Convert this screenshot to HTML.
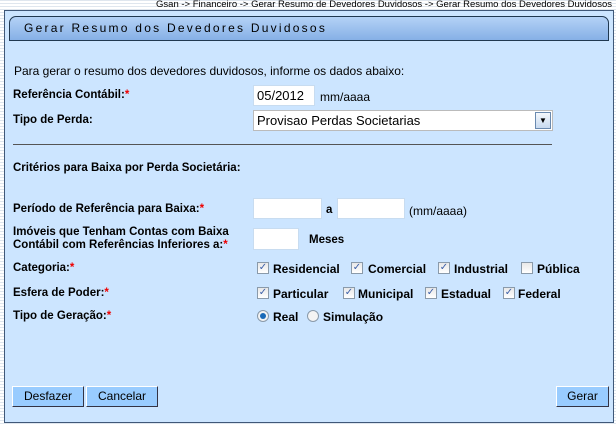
<!DOCTYPE html>
<html><head><meta charset="utf-8"><style>
*{margin:0;padding:0;box-sizing:border-box}
body{width:616px;height:425px;overflow:hidden;background:#fff;font-family:"Liberation Sans",Arial,sans-serif;position:relative;
background-image:repeating-linear-gradient(180deg,#dfe6ee 0 1px,#fff 1px 3px);}
.a{position:absolute;white-space:nowrap}
.l{font-size:11.5px;font-weight:bold;color:#000}
.r{color:#e00}
.in{position:absolute;background:#fff;border:1px solid #c8dcf0;height:21px;font-size:13px;padding:2px 3px}
.cb{position:absolute;width:12px;height:12px;border:1px solid #8a9aaa;background:linear-gradient(#e8e8e8,#fff);font-size:10px;line-height:10px;text-align:center;color:#3c5fa8}
.rd{position:absolute;width:12px;height:12px;border:1px solid #8a9aaa;border-radius:50%;background:#f4f4f4}
.btn{position:absolute;top:386px;height:21px;background:#99ccff;border:1px solid;border-color:#fff #334 #334 #fff;font-size:12px;text-align:center;line-height:19px}
</style></head><body>
<div class="a" style="right:4px;top:-1px;font-size:9.5px;color:#000">Gsan -&gt; Financeiro -&gt; Gerar Resumo de Devedores Duvidosos -&gt; Gerar Resumo dos Devedores Duvidosos</div>
<div class="a" style="left:4px;top:10px;width:610px;height:413px;background:#cce5ff;border:1px solid #405878"></div>
<div class="a" style="left:9px;top:16px;width:600px;height:25px;border:1px solid #203850;border-radius:7px 7px 0 0;background:linear-gradient(#b4d2f6,#86b0e6);"></div>
<div class="a" style="left:24px;top:21px;font-size:12px;letter-spacing:2.25px;color:#000">Gerar Resumo dos Devedores Duvidosos</div>
<div class="a" style="left:14px;top:64px;font-size:12px">Para gerar o resumo dos devedores duvidosos, informe os dados abaixo:</div>
<div class="a l" style="left:13px;top:89px">Referência Contábil:<span class="r">*</span></div>
<div class="in" style="left:253px;top:85px;width:62px">05/2012</div>
<div class="a" style="left:320px;top:90px;font-size:12px">mm/aaaa</div>
<div class="a l" style="left:13px;top:114px">Tipo de Perda:</div>
<div class="in" style="left:253px;top:110px;width:300px;height:21px;border-color:#bbb">Provisao Perdas Societarias</div>
<div class="a" style="left:535px;top:112px;width:16px;height:17px;border:1px solid #6a8ab0;background:linear-gradient(#f4f8fc,#c8daf0);font-size:8px;text-align:center;line-height:16px">▼</div>
<div class="a" style="left:13px;top:144px;width:539px;height:1px;background:#555"></div>
<div class="a l" style="left:13px;top:162px">Critérios para Baixa por Perda Societária:</div>
<div class="a l" style="left:13px;top:203px">Período de Referência para Baixa:<span class="r">*</span></div>
<div class="in" style="left:253px;top:198px;width:69px"></div>
<div class="a l" style="left:326px;top:204px">a</div>
<div class="in" style="left:337px;top:198px;width:68px"></div>
<div class="a" style="left:409px;top:204px;font-size:12px">(mm/aaaa)</div>
<div class="a l" style="left:13px;top:226px;line-height:13px">Imóveis que Tenham Contas com Baixa<br>Contábil com Referências Inferiores a:<span class="r">*</span></div>
<div class="in" style="left:253px;top:228px;width:46px;height:22px"></div>
<div class="a l" style="left:309px;top:234px">Meses</div>
<div class="a l" style="left:13px;top:262px">Categoria:<span class="r">*</span></div>
<div class="cb" style="left:257px;top:262px">✓</div><div class="a l" style="left:273px;top:262px;font-size:12px">Residencial</div>
<div class="cb" style="left:351px;top:262px">✓</div><div class="a l" style="left:368px;top:262px;font-size:12px">Comercial</div>
<div class="cb" style="left:438px;top:262px">✓</div><div class="a l" style="left:454px;top:262px;font-size:12px">Industrial</div>
<div class="cb" style="left:521px;top:262px"></div><div class="a l" style="left:537px;top:262px;font-size:12px">Pública</div>
<div class="a l" style="left:13px;top:287px">Esfera de Poder:<span class="r">*</span></div>
<div class="cb" style="left:257px;top:287px">✓</div><div class="a l" style="left:273px;top:287px;font-size:12px">Particular</div>
<div class="cb" style="left:343px;top:287px">✓</div><div class="a l" style="left:358px;top:287px;font-size:12px">Municipal</div>
<div class="cb" style="left:425px;top:287px">✓</div><div class="a l" style="left:441px;top:287px;font-size:12px">Estadual</div>
<div class="cb" style="left:503px;top:287px">✓</div><div class="a l" style="left:518px;top:287px;font-size:12px">Federal</div>
<div class="a l" style="left:13px;top:310px">Tipo de Geração:<span class="r">*</span></div>
<div class="rd" style="left:257px;top:310px"><div style="position:absolute;left:2px;top:2px;width:6px;height:6px;border-radius:50%;background:#1a6ab8"></div></div>
<div class="a l" style="left:273px;top:310px;font-size:12px">Real</div>
<div class="rd" style="left:307px;top:310px"></div>
<div class="a l" style="left:323px;top:310px;font-size:12px">Simulação</div>
<div class="btn" style="left:12px;width:72px">Desfazer</div>
<div class="btn" style="left:86px;width:72px">Cancelar</div>
<div class="btn" style="left:556px;width:53px">Gerar</div>
</body></html>
